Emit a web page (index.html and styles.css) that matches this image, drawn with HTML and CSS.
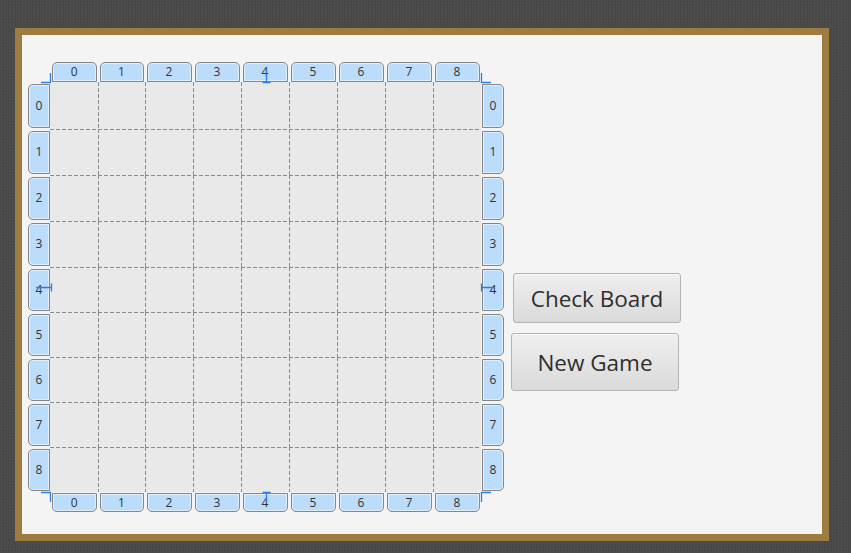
FILE: index.html
```html
<!DOCTYPE html>
<html>
<head>
<meta charset="utf-8">
<link rel="stylesheet" href="styles.css">
</head>
<body>
<div class="frame">
  <div class="panel">
    <div class="board">
      <div class="corner"></div>
      <div class="bar hbar top">
        <div class="lbl">0</div><div class="lbl">1</div><div class="lbl">2</div><div class="lbl">3</div><div class="lbl">4</div><div class="lbl">5</div><div class="lbl">6</div><div class="lbl">7</div><div class="lbl">8</div>
      </div>
      <div class="corner"></div>
      <div class="bar vbar left">
        <div class="lbl">0</div><div class="lbl">1</div><div class="lbl">2</div><div class="lbl">3</div><div class="lbl">4</div><div class="lbl">5</div><div class="lbl">6</div><div class="lbl">7</div><div class="lbl">8</div>
      </div>
      <div class="field">
        <div class="c"></div><div class="c"></div><div class="c"></div><div class="c"></div><div class="c"></div><div class="c"></div><div class="c"></div><div class="c"></div><div class="c"></div>
        <div class="c"></div><div class="c"></div><div class="c"></div><div class="c"></div><div class="c"></div><div class="c"></div><div class="c"></div><div class="c"></div><div class="c"></div>
        <div class="c"></div><div class="c"></div><div class="c"></div><div class="c"></div><div class="c"></div><div class="c"></div><div class="c"></div><div class="c"></div><div class="c"></div>
        <div class="c"></div><div class="c"></div><div class="c"></div><div class="c"></div><div class="c"></div><div class="c"></div><div class="c"></div><div class="c"></div><div class="c"></div>
        <div class="c"></div><div class="c"></div><div class="c"></div><div class="c"></div><div class="c"></div><div class="c"></div><div class="c"></div><div class="c"></div><div class="c"></div>
        <div class="c"></div><div class="c"></div><div class="c"></div><div class="c"></div><div class="c"></div><div class="c"></div><div class="c"></div><div class="c"></div><div class="c"></div>
        <div class="c"></div><div class="c"></div><div class="c"></div><div class="c"></div><div class="c"></div><div class="c"></div><div class="c"></div><div class="c"></div><div class="c"></div>
        <div class="c"></div><div class="c"></div><div class="c"></div><div class="c"></div><div class="c"></div><div class="c"></div><div class="c"></div><div class="c"></div><div class="c"></div>
        <div class="c"></div><div class="c"></div><div class="c"></div><div class="c"></div><div class="c"></div><div class="c"></div><div class="c"></div><div class="c"></div><div class="c"></div>
      </div>
      <div class="bar vbar right">
        <div class="lbl">0</div><div class="lbl">1</div><div class="lbl">2</div><div class="lbl">3</div><div class="lbl">4</div><div class="lbl">5</div><div class="lbl">6</div><div class="lbl">7</div><div class="lbl">8</div>
      </div>
      <div class="corner"></div>
      <div class="bar hbar bottom">
        <div class="lbl">0</div><div class="lbl">1</div><div class="lbl">2</div><div class="lbl">3</div><div class="lbl">4</div><div class="lbl">5</div><div class="lbl">6</div><div class="lbl">7</div><div class="lbl">8</div>
      </div>
      <div class="corner"></div>
      <svg class="marks" width="476" height="450" viewBox="0 0 476 450">
        <g stroke="#2f7de1" stroke-width="1.3" fill="none">
          <path d="M22.5 11V20.5H13"/>
          <path d="M453.5 11V20.5H463"/>
          <path d="M13 430.5H22.5V440"/>
          <path d="M463 430.5H453.5V440"/>
          <path d="M238.5 8V20.5M234.5 20.5H242.5"/>
          <path d="M238.5 440V430.5M234.5 430.5H242.5"/>
          <path d="M8 225.5H23.5M23.5 221.5V229.5"/>
          <path d="M466 225.5H453.5M453.5 221.5V229.5"/>
        </g>
      </svg>
    </div>
    <div class="actions">
      <button class="btn check">Check Board</button>
      <button class="btn new">New Game</button>
    </div>
  </div>
</div>
</body>
</html>
```

FILE: styles.css
```css
html, body {
  margin: 0;
  padding: 0;
}
body {
  width: 851px;
  height: 553px;
  overflow: hidden;
  background-color: #4a4a4a;
  background-image: repeating-conic-gradient(#4d4d4d 0 25%, #464646 0 50%);
  background-size: 3px 3px;
  font-family: "Open Sans", "Noto Sans", sans-serif;
}
.frame {
  margin: 28px 0 0 15px;
  width: 800px;
  height: 499px;
  border: 7px solid #9e7c40;
  background: #f4f4f4;
}
.panel {
  display: flex;
  align-items: flex-start;
  padding: 27px 0 0 6px;
}
.board {
  position: relative;
  display: grid;
  grid-template-columns: 22px 431px 23px;
  grid-template-rows: 20px 410px 20px;
}
.bar {
  display: grid;
}
.hbar {
  grid-template-columns: 48px 47px 48px 48px 48px 48px 48px 48px 48px;
}
.vbar {
  grid-template-rows: 47px 46px 46px 46px 45px 45px 45px 45px 45px;
}
.field {
  display: grid;
  grid-template-columns: 48px 47px 48px 48px 48px 48px 48px 48px 48px;
  grid-template-rows: 47px 46px 46px 46px 45px 45px 45px 45px 45px;
  background: #e9e9e9;
}
.c {
  --v: #8b8b8b;
  --h: #8b8b8b;
  background-image:
    repeating-linear-gradient(to bottom, var(--v) 0 4px, transparent 4px 6px),
    repeating-linear-gradient(to right, var(--h) 0 4px, transparent 4px 6px);
  background-size: 1px 100%, 100% 1px;
  background-repeat: no-repeat;
  background-position: left top, left top;
}
.c:nth-child(9n+1) {
  --v: transparent;
}
.c:nth-child(-n+9) {
  --h: transparent;
}
.lbl {
  box-sizing: border-box;
  background: #bbdcfb;
  border: 1px solid #858585;
  box-shadow: inset 0 0 0 1px rgba(255, 255, 255, 0.55);
  color: #333;
  font-size: 12px;
  display: flex;
  align-items: center;
  justify-content: center;
  line-height: 1;
}
.top .lbl {
  margin: 0 1.5px 0 1.5px;
  border-radius: 5px 5px 0 0;
}
.top .lbl:first-child {
  margin-left: 2px;
}
.bottom .lbl {
  margin: 1px 1.5px 0 1.5px;
  border-radius: 0 0 5px 5px;
}
.bottom .lbl:first-child {
  margin-left: 2px;
}
.left .lbl {
  margin: 1.5px 0;
  border-radius: 5px 0 0 5px;
}
.left .lbl:first-child {
  margin-top: 2px;
}
.right .lbl {
  margin: 1.5px 0 1.5px 1px;
  border-radius: 0 5px 5px 0;
}
.right .lbl:first-child {
  margin-top: 2px;
}
.marks {
  position: absolute;
  left: 0;
  top: 0;
  pointer-events: none;
}
.actions {
  display: flex;
  flex-direction: column;
  gap: 10px;
  margin: 211px 0 0 7px;
}
.btn {
  box-sizing: border-box;
  width: 168px;
  border: 1px solid #b4b4b4;
  border-radius: 3px;
  background: linear-gradient(#efefef, #dadada);
  box-shadow: inset 0 1px 0 rgba(255, 255, 255, 0.6);
  color: #2e2e2e;
  font-family: "Open Sans", "Noto Sans", sans-serif;
  font-size: 22.5px;
  padding: 0;
  display: flex;
  align-items: center;
  justify-content: center;
}
.check {
  height: 50px;
  margin-left: 2px;
}
.new {
  height: 58px;
}
```
